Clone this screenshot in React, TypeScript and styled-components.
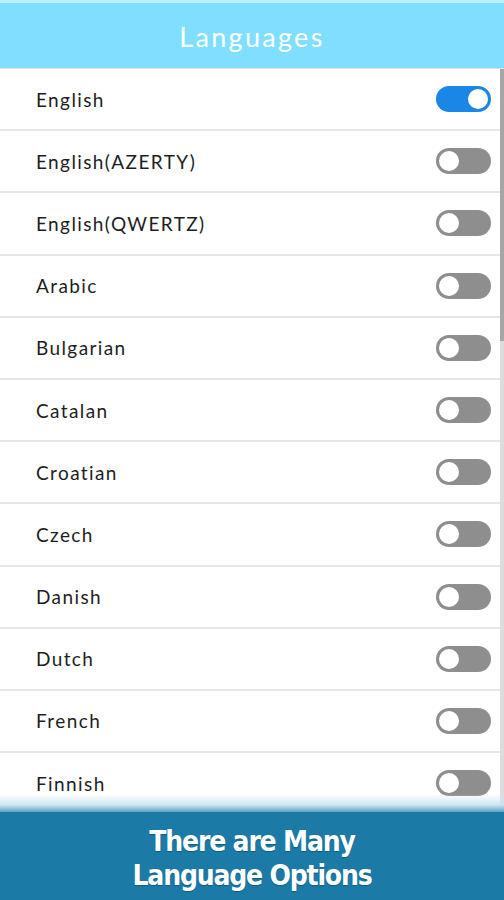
import React from "react";
import styled, { createGlobalStyle } from "styled-components";

const Global = createGlobalStyle`
  html, body { margin: 0; padding: 0; background: #ffffff; }
  * { box-sizing: border-box; }
`;

const Page = styled.div`
  width: 504px;
  height: 900px;
  display: flex;
  flex-direction: column;
  overflow: hidden;
  position: relative;
  background: #fff;
`;

const Header = styled.header`
  height: 69px;
  flex: none;
  background: #80dffe;
  border-top: 3px solid #b9eefd;
  border-bottom: 1px solid #e2e2e2;
  display: flex;
  align-items: center;
  justify-content: center;
  padding-top: 2px;
  color: #ffffff;
  font-family: "Lato", sans-serif;
  font-weight: 400;
  font-size: 27px;
  letter-spacing: 2.3px;
`;

const ListWrap = styled.div`
  flex: 1;
  position: relative;
  overflow: hidden;
`;

const List = styled.ul`
  list-style: none;
  margin: 0;
  padding: 0 4px 0 0;
`;

const Row = styled.li`
  height: 62.2px;
  display: flex;
  align-items: center;
  justify-content: space-between;
  padding: 0 9px 0 36px;
  border-bottom: 2px solid #e6e6e6;
  font-family: "Lato", sans-serif;
  font-size: 19px;
  letter-spacing: 1.4px;
  color: #1e1e1e;
`;

const Track = styled.span<{ $on: boolean }>`
  width: 55px;
  height: 26px;
  border-radius: 13px;
  background: ${(p) => (p.$on ? "#1a87e6" : "#8e8e8e")};
  display: flex;
  align-items: center;
  justify-content: ${(p) => (p.$on ? "flex-end" : "flex-start")};
  padding: 0 1px;
`;

const Knob = styled.span<{ $on: boolean }>`
  width: 24px;
  height: 24px;
  border-radius: 50%;
  background: #ffffff;
  border: 2px solid ${(p) => (p.$on ? "#1a87e6" : "#8e8e8e")};
`;

const ScrollTrack = styled.div`
  position: absolute;
  top: 0;
  right: 0;
  width: 4px;
  height: 100%;
  background: #dcdcdc;
`;

const ScrollThumb = styled.div`
  position: absolute;
  top: 0;
  right: 0;
  width: 4px;
  height: 272px;
  background: #a6a6a6;
`;

const Banner = styled.footer`
  flex: none;
  height: 88px;
  position: relative;
  background: #1b7aa6;
  display: flex;
  flex-direction: column;
  align-items: center;
  justify-content: center;
  padding-top: 6px;
  color: #ffffff;
  font-family: "DejaVu Sans Condensed", "DejaVu Sans", sans-serif;
  font-stretch: condensed;
  font-weight: 700;
  font-size: 28px;
  line-height: 34px;
  letter-spacing: -1.2px;
  text-shadow: 0 1px 1px rgba(0,0,0,0.25);
  &::before {
    content: "";
    position: absolute;
    left: 0;
    right: 0;
    top: -18px;
    height: 18px;
    background: linear-gradient(to bottom, rgba(255,255,255,0), rgba(200,228,240,0.9) 60%, #5fa3c4);
  }
`;

const langs = [
  "English",
  "English(AZERTY)",
  "English(QWERTZ)",
  "Arabic",
  "Bulgarian",
  "Catalan",
  "Croatian",
  "Czech",
  "Danish",
  "Dutch",
  "French",
  "Finnish",
];

export default function App() {
  return (
    <Page>
      <Global />
      <Header>Languages</Header>
      <ListWrap>
        <List>
          {langs.map((l, i) => (
            <Row key={l}>
              <span>{l}</span>
              <Track $on={i === 0}>
                <Knob $on={i === 0} />
              </Track>
            </Row>
          ))}
        </List>
        <ScrollTrack />
        <ScrollThumb />
      </ListWrap>
      <Banner>
        <span>There are Many</span>
        <span>Language Options</span>
      </Banner>
    </Page>
  );
}
